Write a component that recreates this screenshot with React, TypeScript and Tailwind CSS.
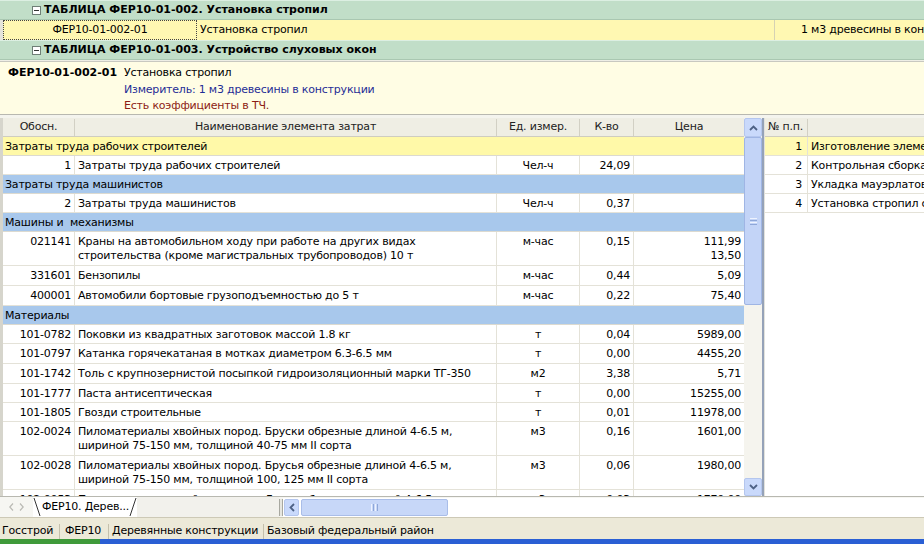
import * as React from "react";

type Band = { kind: "band"; text: string; tone: "yellow" | "blue"; h: number };
type Item = {
  kind: "item";
  code: string;
  name: string[];
  unit: string;
  qty: string;
  price: string[];
  h: number;
};
type Row = Band | Item;

const rows: Row[] = [
  { kind: "band", text: "Затраты труда рабочих строителей", tone: "yellow", h: 19 },
  { kind: "item", code: "1", name: ["Затраты труда рабочих строителей"], unit: "Чел-ч", qty: "24,09", price: [], h: 19 },
  { kind: "band", text: "Затраты труда машинистов", tone: "blue", h: 19 },
  { kind: "item", code: "2", name: ["Затраты труда машинистов"], unit: "Чел-ч", qty: "0,37", price: [], h: 19 },
  { kind: "band", text: "Машины и  механизмы", tone: "blue", h: 19 },
  {
    kind: "item",
    code: "021141",
    name: [
      "Краны на автомобильном ходу при работе на других видах",
      "строительства (кроме магистральных трубопроводов) 10 т",
    ],
    unit: "м-час",
    qty: "0,15",
    price: ["111,99", "13,50"],
    h: 34,
  },
  { kind: "item", code: "331601", name: ["Бензопилы"], unit: "м-час", qty: "0,44", price: ["5,09"], h: 20 },
  { kind: "item", code: "400001", name: ["Автомобили бортовые грузоподъемностью до 5 т"], unit: "м-час", qty: "0,22", price: ["75,40"], h: 20 },
  { kind: "band", text: "Материалы", tone: "blue", h: 19 },
  { kind: "item", code: "101-0782", name: ["Поковки из квадратных заготовок массой 1.8 кг"], unit: "т", qty: "0,04", price: ["5989,00"], h: 19 },
  { kind: "item", code: "101-0797", name: ["Катанка горячекатаная в мотках диаметром 6.3-6.5 мм"], unit: "т", qty: "0,00", price: ["4455,20"], h: 20 },
  { kind: "item", code: "101-1742", name: ["Толь с крупнозернистой посыпкой гидроизоляционный марки ТГ-350"], unit: "м2", qty: "3,38", price: ["5,71"], h: 20 },
  { kind: "item", code: "101-1777", name: ["Паста антисептическая"], unit: "т", qty: "0,00", price: ["15255,00"], h: 19 },
  { kind: "item", code: "101-1805", name: ["Гвозди строительные"], unit: "т", qty: "0,01", price: ["11978,00"], h: 19 },
  {
    kind: "item",
    code: "102-0024",
    name: [
      "Пиломатериалы хвойных пород. Бруски обрезные длиной 4-6.5 м,",
      "шириной 75-150 мм, толщиной 40-75 мм II сорта",
    ],
    unit: "м3",
    qty: "0,16",
    price: ["1601,00"],
    h: 34,
  },
  {
    kind: "item",
    code: "102-0028",
    name: [
      "Пиломатериалы хвойных пород. Брусья обрезные длиной 4-6.5 м,",
      "шириной 75-150 мм, толщиной 100, 125 мм II сорта",
    ],
    unit: "м3",
    qty: "0,06",
    price: ["1980,00"],
    h: 34,
  },
  {
    kind: "item",
    code: "102-0053",
    name: [
      "Пиломатериалы хвойных пород. Доски обрезные длиной 4-6.5 м,",
      "шириной 75-150 мм, толщиной 44 мм и более IV сорта",
    ],
    unit: "м3",
    qty: "0,03",
    price: ["1770,00"],
    h: 34,
  },
];

const works = [
  "Изготовление элементов",
  "Контрольная сборка",
  "Укладка мауэрлатов",
  "Установка стропил с",
];

function MinusBox() {
  return (
    <span className="mr-[3px] flex h-[9px] w-[9px] items-center justify-center border border-[#6f7f76] bg-white">
      <span className="h-px w-[5px] bg-[#333]" />
    </span>
  );
}

function GroupRow({ title }: { title: string }) {
  return (
    <div className="flex h-[20px] items-center border-b border-t border-b-[#a9c7b1] border-t-[#dcefe2] bg-[#c1dec8] pl-[32px] text-[11px] font-bold tracking-normal">
      <MinusBox />
      <span className="whitespace-nowrap">{title}</span>
    </div>
  );
}

function Chevron({ down = false }: { down?: boolean }) {
  return (
    <svg width="9" height="6" viewBox="0 0 9 6">
      <polyline
        points={down ? "1,1 4.5,4.5 8,1" : "1,5 4.5,1.5 8,5"}
        fill="none"
        stroke="#4d6185"
        strokeWidth="1.8"
      />
    </svg>
  );
}

function Grip({ vertical = false }: { vertical?: boolean }) {
  return vertical ? (
    <div className="flex flex-col gap-[1px]">
      <span className="h-px w-[7px] bg-[#eef3fe]" />
      <span className="h-px w-[7px] bg-[#8fa7d8]" />
      <span className="h-px w-[7px] bg-[#eef3fe]" />
      <span className="h-px w-[7px] bg-[#8fa7d8]" />
    </div>
  ) : (
    <div className="flex gap-[1px]">
      <span className="h-[7px] w-px bg-[#eef3fe]" />
      <span className="h-[7px] w-px bg-[#8fa7d8]" />
      <span className="h-[7px] w-px bg-[#eef3fe]" />
      <span className="h-[7px] w-px bg-[#8fa7d8]" />
    </div>
  );
}

function TableRow({ row }: { row: Row }) {
  if (row.kind === "band") {
    return (
      <div
        style={{ height: row.h }}
        className={
          "shrink-0 whitespace-pre border-b border-[#dcdad0] pl-[2px] pt-[3px] leading-[14px] " +
          (row.tone === "yellow" ? "bg-[#fff9a8]" : "bg-[#a8c8ec]")
        }
      >
        {row.text}
      </div>
    );
  }
  return (
    <div style={{ height: row.h }} className="flex shrink-0 border-b border-[#e4e2d8] bg-white leading-[14px]">
      <div className="w-[72px] border-r border-[#e4e2d8] pr-[3px] pt-[3px] text-right">{row.code}</div>
      <div className="w-[422px] overflow-hidden whitespace-nowrap border-r border-[#e4e2d8] pl-[3px] pt-[3px]">
        {row.name.map((l) => (
          <div key={l}>{l}</div>
        ))}
      </div>
      <div className="w-[83px] border-r border-[#e4e2d8] pt-[3px] text-center">{row.unit}</div>
      <div className="w-[54px] border-r border-[#e4e2d8] pr-[3px] pt-[3px] text-right">{row.qty}</div>
      <div className="w-[110px] pr-[3px] pt-[3px] text-right">
        {row.price.map((p) => (
          <div key={p}>{p}</div>
        ))}
      </div>
    </div>
  );
}

export default function App() {
  return (
    <div className="flex h-[544px] w-[924px] flex-col overflow-hidden bg-white font-['DejaVu_Sans',sans-serif] text-[11px] tracking-[-0.2px] text-black">
      <GroupRow title="ТАБЛИЦА ФЕР10-01-002. Установка стропил" />
      <div className="flex h-[20px] bg-[#fff8b2]">
        <div className="w-[3px] bg-[#e4e4dc]" />
        <div className="flex w-[194px] items-center justify-center border border-dotted border-[#444]">
          ФЕР10-01-002-01
        </div>
        <div className="flex w-[578px] items-center border-r border-[#d6d2b4] pl-[3px]">Установка стропил</div>
        <div className="flex flex-1 items-center overflow-hidden whitespace-nowrap pl-[26px]">
          1 м3 древесины в конструкции
        </div>
      </div>
      <GroupRow title="ТАБЛИЦА ФЕР10-01-003. Устройство слуховых окон" />
      <div className="h-[2px] border-b border-[#c8c8c0] bg-[#eeeee6]" />
      <div className="flex h-[52px] bg-[#fffde4] pl-[8px] pt-[3px] leading-[16.5px]">
        <div className="w-[116px] font-bold tracking-normal">ФЕР10-01-002-01</div>
        <div className="flex flex-col">
          <span>Установка стропил</span>
          <span className="text-[#1f2d96]">Измеритель: 1 м3 древесины в конструкции</span>
          <span className="text-[#8c1c14]">Есть коэффициенты в ТЧ.</span>
        </div>
      </div>
      <div className="h-[4px] border-t border-[#b8b8b0] bg-[#f4f4ee]" />

      <div className="flex h-[378px]">
        <div className="flex w-[744px] flex-col overflow-hidden border-l-[3px] border-[#d6d5cc]">
          <div className="flex h-[19px] shrink-0 items-center border-b border-[#cfcdc0] bg-[#efeee4] pt-[1px] text-[#222]">
            <div className="w-[72px] border-r border-[#d2d0c4] text-center">Обосн.</div>
            <div className="w-[422px] border-r border-[#d2d0c4] text-center">Наименование элемента затрат</div>
            <div className="w-[83px] border-r border-[#d2d0c4] text-center">Ед. измер.</div>
            <div className="w-[54px] border-r border-[#d2d0c4] text-center">К-во</div>
            <div className="w-[110px] text-center">Цена</div>
          </div>
          {rows.map((r, i) => (
            <TableRow key={i} row={r} />
          ))}
        </div>

        <div className="flex w-[18px] flex-col bg-[#f5f4ee]">
          <div className="flex h-[19px] items-center justify-center rounded-[2px] border border-[#b4c6ee] bg-[#c9d9fb]">
            <Chevron />
          </div>
          <div className="flex h-[168px] items-center justify-center rounded-[2px] border border-[#9fb5e4] bg-[#c3d4f7]">
            <Grip vertical />
          </div>
          <div className="flex-1" />
          <div className="flex h-[18px] items-center justify-center rounded-[2px] border border-[#b4c6ee] bg-[#c9d9fb]">
            <Chevron down />
          </div>
        </div>

        <div className="w-[3px] border-l-2 border-[#95a2b8] bg-[#e2e2dc]" />

        <div className="flex flex-1 flex-col overflow-hidden">
          <div className="flex h-[19px] shrink-0 items-center border-b border-[#cfcdc0] bg-[#efeee4] pt-[1px] text-[#222]">
            <div className="w-[43px] border-r border-[#d2d0c4] pl-[3px]">№ п.п.</div>
            <div className="flex-1" />
          </div>
          {works.map((w, i) => (
            <div
              key={w}
              className={
                "flex h-[19px] shrink-0 border-b border-[#e4e2d8] leading-[14px] " +
                (i === 0 ? "bg-[#fffab4]" : "bg-white")
              }
            >
              <div className="w-[43px] border-r border-[#e4e2d8] pr-[5px] pt-[3px] text-right">{i + 1}</div>
              <div className="flex-1 overflow-hidden whitespace-nowrap pl-[3px] pt-[3px]">{w}</div>
            </div>
          ))}
        </div>
      </div>

      <div className="flex h-[21px] items-center border-t border-[#b8b8b0] bg-[#f6f6f2]">
        <div className="flex w-[33px] items-center justify-center gap-[5px]">
          <svg width="5" height="8" viewBox="0 0 5 8">
            <polyline points="4,0.5 0.8,4 4,7.5" fill="none" stroke="#b9b9b4" strokeWidth="1.2" />
          </svg>
          <svg width="5" height="8" viewBox="0 0 5 8">
            <polyline points="1,0.5 4.2,4 1,7.5" fill="none" stroke="#b9b9b4" strokeWidth="1.2" />
          </svg>
        </div>
        <div className="relative flex h-[20px] w-[104px] items-center bg-white pl-[9px]">
          <svg className="absolute left-0 top-0" width="8" height="20" viewBox="0 0 8 20">
            <line x1="1" y1="1" x2="7" y2="19" stroke="#333" strokeWidth="1" />
          </svg>
          <span className="whitespace-nowrap">ФЕР10. Дерев...</span>
          <svg className="absolute right-0 top-0" width="8" height="20" viewBox="0 0 8 20">
            <line x1="7" y1="1" x2="1" y2="19" stroke="#333" strokeWidth="1" />
          </svg>
        </div>
        <div className="w-[142px] self-stretch bg-[#f2f1ec]" />
        <div className="h-[17px] w-[4px] border-x border-[#a8a8a0] bg-[#e6e6e0]" />
        <div className="flex h-[19px] flex-1 items-center gap-[2px] bg-white pl-[1px]">
          <div className="flex h-[17px] w-[15px] items-center justify-center rounded-[2px] border border-[#b4c6ee] bg-[#c9d9fb]">
            <svg width="6" height="9" viewBox="0 0 6 9">
              <polyline points="5,1 1.5,4.5 5,8" fill="none" stroke="#4d6185" strokeWidth="1.8" />
            </svg>
          </div>
          <div className="flex h-[17px] w-[147px] items-center justify-center rounded-[2px] border border-[#a9bde8] bg-[#c7d7f8]">
            <Grip />
          </div>
        </div>
      </div>

      <div className="flex h-[22px] items-center whitespace-nowrap border-t border-[#cdc9b6] bg-[#ece9d8] pt-[5px]">
        <div className="w-[59px] pl-[2px]">Госстрой</div>
        <div className="h-[15px] w-px bg-[#c4c0ac]" />
        <div className="w-[48px] pl-[5px]">ФЕР10</div>
        <div className="h-[15px] w-px bg-[#c4c0ac]" />
        <div className="w-[154px] pl-[3px]">Деревянные конструкции</div>
        <div className="h-[15px] w-px bg-[#c4c0ac]" />
        <div className="pl-[3px]">Базовый федеральный район</div>
      </div>

      <div className="flex h-[5px]">
        <div className="w-[100px] bg-[#3f9a3a]" />
        <div className="flex-1 bg-[#2a5fd4]" />
      </div>
    </div>
  );
}
